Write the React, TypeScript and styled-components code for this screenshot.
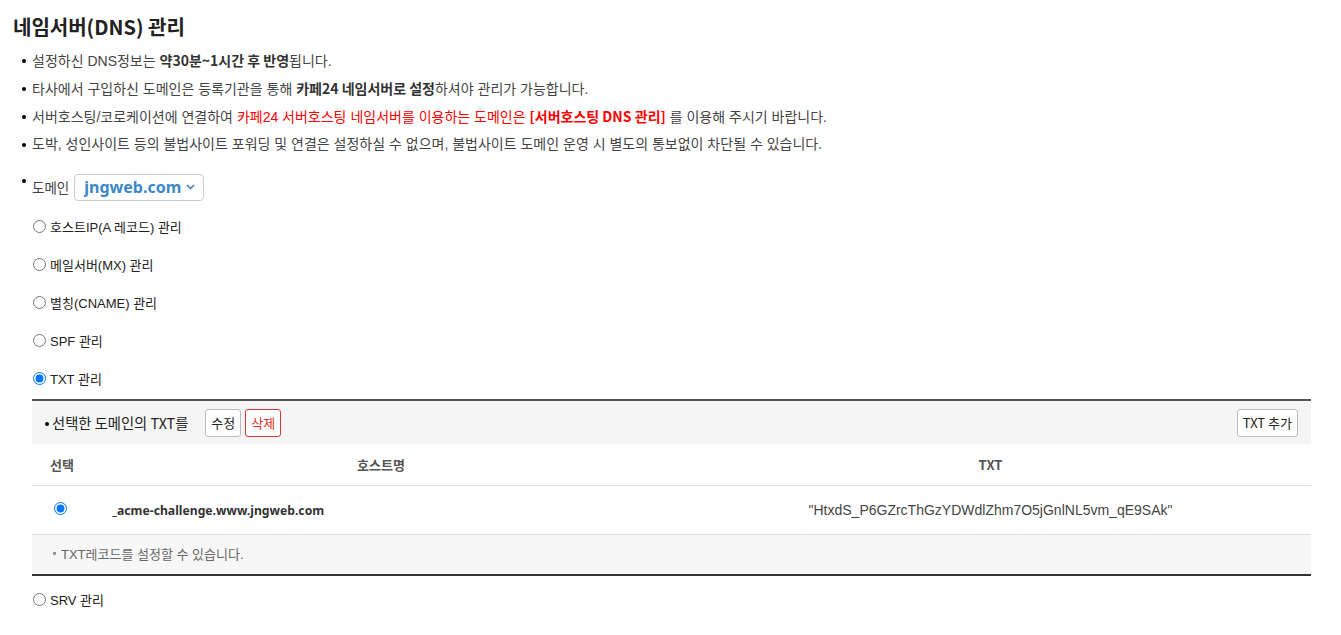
import React, { useState } from "react";
import styled, { createGlobalStyle } from "styled-components";

const GlobalStyle = createGlobalStyle`
  html, body { margin: 0; padding: 0; background: #fff; }
  body {
    font-family: "Liberation Sans", "Noto Sans CJK KR", sans-serif;
    color: #333;
  }
`;

const Page = styled.div`
  padding: 10px 30px 20px 13px;
`;

const Title = styled.h1`
  margin: 0;
  height: 34px;
  line-height: 34px;
  font-family: "Noto Sans CJK KR", sans-serif;
  font-size: 20px;
  font-weight: 700;
  color: #222;
`;

const NoticeList = styled.ul`
  list-style: none;
  margin: 2px 0 0 0;
  padding: 0 0 0 9px;
`;

const NoticeItem = styled.li`
  position: relative;
  height: 28px;
  line-height: 28px;
  padding-left: 10px;
  font-size: 14px;
  color: #444;
  &::before {
    content: "";
    position: absolute;
    left: 0;
    top: 13px;
    width: 4px;
    height: 4px;
    border-radius: 50%;
    background: #000;
  }
`;

const Strong = styled.b<{ $red?: boolean }>`
  font-family: "Noto Sans CJK KR", sans-serif;
  font-weight: 700;
  color: ${(p) => (p.$red ? "#ff0000" : "#333")};
`;

const Red = styled.span`
  color: #ff0000;
`;

const DomainRow = styled.div`
  position: relative;
  display: flex;
  align-items: center;
  gap: 5px;
  margin: 16px 0 0 9px;
  padding-left: 10px;
  height: 26px;
  font-size: 13.5px;
  color: #444;
  &::before {
    content: "";
    position: absolute;
    left: 0;
    top: 5px;
    width: 4px;
    height: 4px;
    border-radius: 50%;
    background: #000;
  }
`;

const SelectWrap = styled.div`
  position: relative;
  display: inline-flex;
`;

const DomainSelect = styled.select`
  appearance: none;
  -webkit-appearance: none;
  width: 130px;
  height: 27px;
  padding: 0 20px 0 9px;
  border: 1px solid #ccc;
  border-radius: 4px;
  background: #fff;
  font-family: "Noto Sans", sans-serif;
  font-size: 16px;
  font-weight: 700;
  color: #3c87c7;
  outline: none;
`;

const Chevron = styled.svg`
  position: absolute;
  right: 9px;
  top: 10px;
  pointer-events: none;
`;

const RadioList = styled.div`
  margin: 7px 0 0 20px;
`;

const RadioLabel = styled.label`
  display: flex;
  align-items: center;
  height: 38px;
  font-size: 13px;
  color: #222;
  cursor: pointer;
`;

const Radio = styled.input.attrs({ type: "radio" })`
  margin: 0 4px 0 0;
  width: 13px;
  height: 13px;
`;

const Panel = styled.section`
  margin: 2px 0 0 19px;
  border-top: 2px solid #555;
  border-bottom: 2px solid #333;
`;

const PanelHead = styled.div`
  display: flex;
  align-items: center;
  gap: 4px;
  height: 43px;
  padding: 0 13px 0 13px;
  background: #f5f5f5;
`;

const HeadLabel = styled.span`
  position: relative;
  padding-left: 7px;
  margin-right: 13px;
  font-family: "Noto Sans CJK KR", sans-serif;
  font-size: 14.3px;
  color: #222;
  &::before {
    content: "";
    position: absolute;
    left: 0;
    top: 10px;
    width: 4px;
    height: 4px;
    border-radius: 50%;
    background: #000;
  }
`;

const Button = styled.button<{ $danger?: boolean }>`
  height: 28px;
  padding: 0 5px;
  border: 1px solid ${(p) => (p.$danger ? "#d53a32" : "#bbb")};
  border-radius: 3px;
  background: #fff;
  font-family: "Noto Sans CJK KR", sans-serif;
  font-size: 13px;
  color: ${(p) => (p.$danger ? "#e0302a" : "#222")};
  cursor: pointer;
`;

const Spacer = styled.div`
  flex: 1;
`;

const Table = styled.table`
  width: 100%;
  border-collapse: collapse;
  table-layout: fixed;
`;

const Th = styled.th<{ $w?: number }>`
  height: 41px;
  padding: 0;
  width: ${(p) => (p.$w ? `${p.$w}px` : "auto")};
  border-bottom: 1px solid #ddd;
  font-family: "Noto Sans CJK KR", sans-serif;
  font-size: 13px;
  font-weight: 700;
  color: #555;
  text-align: center;
`;

const Td = styled.td<{ $align?: string }>`
  height: 48px;
  padding: 0;
  border-bottom: 1px solid #ddd;
  text-align: ${(p) => p.$align || "center"};
  vertical-align: middle;
`;

const HostName = styled.span`
  padding-left: 20px;
  font-family: "Noto Sans", sans-serif;
  font-size: 12.2px;
  font-weight: 700;
  color: #333;
`;

const TxtValue = styled.span`
  font-family: "Liberation Sans", sans-serif;
  font-size: 14px;
  color: #444;
`;

const Footnote = styled.div`
  display: flex;
  align-items: center;
  gap: 5px;
  height: 39px;
  padding: 0 0 3px 21px;
  box-sizing: border-box;
  background: #f7f7f7;
  font-size: 13px;
  color: #666;
  &::before {
    content: "";
    width: 3px;
    height: 3px;
    background: #999;
  }
`;

const TailRadio = styled(RadioList)`
  margin-top: 4px;
`;

const options = [
  "호스트IP(A 레코드) 관리",
  "메일서버(MX) 관리",
  "별칭(CNAME) 관리",
  "SPF 관리",
  "TXT 관리",
];

export default function App() {
  const [kind, setKind] = useState("TXT 관리");
  return (
    <>
      <GlobalStyle />
      <Page>
        <Title>네임서버(DNS) 관리</Title>
        <NoticeList>
          <NoticeItem>
            설정하신 DNS정보는 <Strong>약30분~1시간 후 반영</Strong>됩니다.
          </NoticeItem>
          <NoticeItem>
            타사에서 구입하신 도메인은 등록기관을 통해{" "}
            <Strong>카페24 네임서버로 설정</Strong>하셔야 관리가 가능합니다.
          </NoticeItem>
          <NoticeItem>
            서버호스팅/코로케이션에 연결하여{" "}
            <Red>카페24 서버호스팅 네임서버를 이용하는 도메인은</Red>{" "}
            <Strong $red>[서버호스팅 DNS 관리]</Strong> 를 이용해 주시기 바랍니다.
          </NoticeItem>
          <NoticeItem>
            도박, 성인사이트 등의 불법사이트 포워딩 및 연결은 설정하실 수 없으며, 불법사이트 도메인 운영 시 별도의 통보없이 차단될 수 있습니다.
          </NoticeItem>
        </NoticeList>

        <DomainRow>
          도메인
          <SelectWrap>
            <DomainSelect defaultValue="jngweb.com">
              <option value="jngweb.com">jngweb.com</option>
            </DomainSelect>
            <Chevron width="9" height="6" viewBox="0 0 9 6">
              <path d="M1 1l3.5 3.5L8 1" fill="none" stroke="#3c87c7" strokeWidth="1.6" />
            </Chevron>
          </SelectWrap>
        </DomainRow>

        <RadioList>
          {options.map((o) => (
            <RadioLabel key={o}>
              <Radio name="kind" checked={kind === o} onChange={() => setKind(o)} />
              {o}
            </RadioLabel>
          ))}
        </RadioList>

        <Panel>
          <PanelHead>
            <HeadLabel>선택한 도메인의 TXT를</HeadLabel>
            <Button>수정</Button>
            <Button $danger>삭제</Button>
            <Spacer />
            <Button>TXT 추가</Button>
          </PanelHead>
          <Table>
            <thead>
              <tr>
                <Th $w={60}>선택</Th>
                <Th $w={578}>호스트명</Th>
                <Th>TXT</Th>
              </tr>
            </thead>
            <tbody>
              <tr>
                <Td>
                  <Radio name="record" defaultChecked />
                </Td>
                <Td $align="left">
                  <HostName>_acme-challenge.www.jngweb.com</HostName>
                </Td>
                <Td>
                  <TxtValue>"HtxdS_P6GZrcThGzYDWdlZhm7O5jGnlNL5vm_qE9SAk"</TxtValue>
                </Td>
              </tr>
            </tbody>
          </Table>
          <Footnote>TXT레코드를 설정할 수 있습니다.</Footnote>
        </Panel>

        <TailRadio>
          <RadioLabel>
            <Radio name="kind" checked={kind === "SRV 관리"} onChange={() => setKind("SRV 관리")} />
            SRV 관리
          </RadioLabel>
        </TailRadio>
      </Page>
    </>
  );
}
